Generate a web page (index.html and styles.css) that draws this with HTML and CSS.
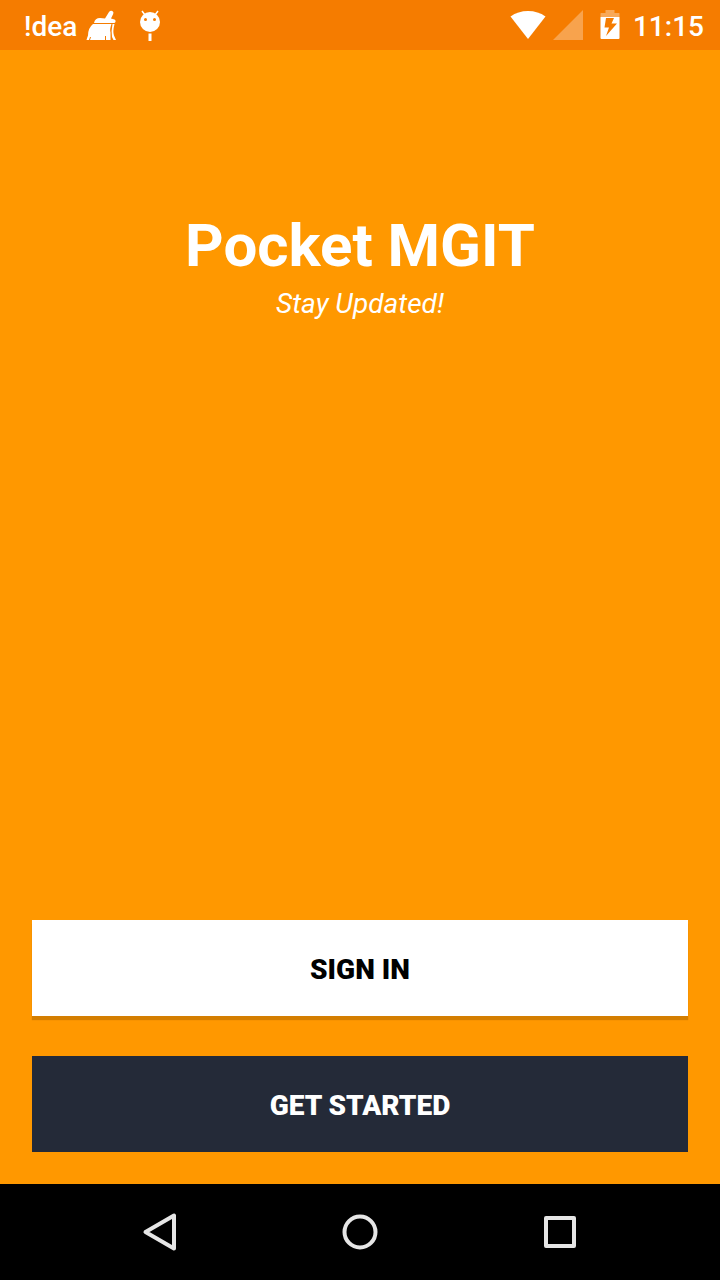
FILE: index.html
```html
<!DOCTYPE html>
<html lang="en">
<head>
<meta charset="utf-8">
<meta name="viewport" content="width=device-width, initial-scale=1">
<title>Pocket MGIT</title>
<link rel="stylesheet" href="styles.css">
</head>
<body>
<header class="status-bar">
  <div class="status-left">
    <span class="carrier">!dea</span>
    <svg class="icon-broom" width="32" height="32" viewBox="0 0 32 32" fill="#fff" aria-hidden="true">
      <path d="M19 8.500L23 2q1.500-2 3.300-1t.9 3L25 8.500l3.500 1q1.500.5 1 2.500l-1 1H8q1-5 6-5z"/>
      <path d="M7 14h18.500q-2 5-1 8.500V30H.5q.5-2 1.500-4.500Q2 18 7 14z"/>
      <path d="M26.500 14h2q-2 8-.5 11.500l2 4.500h-2.500l-1.500-3q-1-6 .500-13z"/>
      <path d="M19.500 26v4M4.500 27l-1 3" fill="none" stroke="#f57c00"/>
    </svg>
    <svg class="icon-android" width="24" height="32" viewBox="0 0 24 32" aria-hidden="true">
      <path d="M4 1l3 4M20 1l-3 4" stroke="#fff" stroke-width="1.500"/>
      <circle cx="12" cy="12" r="10" fill="#fff"/>
      <circle cx="7.500" cy="9.500" r="1.500" fill="#f57c00"/>
      <circle cx="16.500" cy="9.500" r="1.500" fill="#f57c00"/>
      <path d="M10.500 23.500h3V31h-3z" fill="#fff"/>
    </svg>
  </div>
  <div class="status-right">
    <svg width="36" height="32" viewBox="0 0 36 32" aria-hidden="true">
      <path d="M.5 6.500Q8 1 18 1t17.500 5.500L18 29z" fill="#fff"/>
    </svg>
    <svg class="icon-signal" width="30" height="32" viewBox="0 0 30 32" aria-hidden="true">
      <path d="M30 0v30H0z" fill="#fff" fill-opacity=".3"/>
    </svg>
    <svg class="icon-battery" width="20" height="32" viewBox="0 0 20 32" aria-hidden="true">
      <path d="M5.500 0h9v3H19q.5 0 .5.500V7H.5V3.500Q.5 3 1 3h4.500z" fill="#fff" fill-opacity=".35"/>
      <path fill-rule="evenodd" d="M.5 7h19v21q0 1-1 1h-17q-1 0-1-1zM6 8L4.500 17.500H9L6 26l11-12.500h-5.500L14 8z" fill="#fff"/>
    </svg>
    <time class="clock">11:15</time>
  </div>
</header>
<main class="welcome">
  <div class="brand">
    <h1 class="brand-name">Pocket MGIT</h1>
    <p class="tagline">Stay Updated!</p>
  </div>
  <div class="actions">
    <button class="action action-light" type="button">SIGN IN</button>
    <button class="action action-dark" type="button">GET STARTED</button>
  </div>
</main>
<nav class="nav-bar" aria-label="System">
  <button class="nav-key" type="button" aria-label="Back">
    <svg width="40" height="40" viewBox="0 0 40 40"><path d="M5.500 20L34 3.500v33z"/></svg>
  </button>
  <button class="nav-key" type="button" aria-label="Home">
    <svg width="40" height="40" viewBox="0 0 40 40"><circle cx="20" cy="20" r="15.500"/></svg>
  </button>
  <button class="nav-key" type="button" aria-label="Recent apps">
    <svg width="40" height="40" viewBox="0 0 40 40"><path d="M6 6h28v28H6z"/></svg>
  </button>
</nav>
</body>
</html>
```
FILE: styles.css
```css
* {
  box-sizing: border-box;
}

body {
  margin: 0;
  min-height: 100vh;
  display: flex;
  flex-direction: column;
  background: #ff9800;
  color: #fff;
  font-family: Roboto, "Liberation Sans", sans-serif;
}

svg {
  display: block;
}

.status-bar {
  height: 50px;
  padding: 2px 16px 0 24px;
  display: flex;
  justify-content: space-between;
  background: #f57c00;
  font-size: 28px;
  font-weight: 500;
  line-height: 32px;
}

.status-left,
.status-right {
  display: flex;
  align-items: center;
}

.carrier,
.clock {
  padding-top: 2px;
}

.icon-broom {
  margin-left: 9px;
}

.icon-android {
  margin-left: 20px;
}

.icon-signal {
  margin-left: 7px;
}

.icon-battery {
  margin: 0 13px 0 17px;
}

.welcome {
  flex: 1;
  padding: 160px 32px 32px;
  display: flex;
  flex-direction: column;
  justify-content: space-between;
}

.brand {
  text-align: center;
}

.brand-name {
  margin: 0;
  font-size: 60px;
  font-weight: 700;
  line-height: 72px;
}

.tagline {
  margin: 4px 0 0;
  font-size: 28px;
  font-style: italic;
  line-height: 36px;
}

.actions {
  display: flex;
  flex-direction: column;
  gap: 40px;
}

.action {
  height: 96px;
  padding: 4px 16px 0;
  border: 0;
  font: 900 28px/32px Roboto, "Liberation Sans", sans-serif;
}

.action-light {
  background: #fff;
  color: #000;
  box-shadow: 0 4px 1px rgba(0, 0, 0, 0.17);
}

.action-dark {
  background: #242a38;
  color: #fff;
}

.nav-bar {
  height: 96px;
  padding: 0 60px;
  display: grid;
  grid-template-columns: repeat(3, 1fr);
  background: #000;
}

.nav-key {
  padding: 0;
  border: 0;
  display: grid;
  place-items: center;
  background: none;
  fill: none;
  stroke: #e6e6e6;
  stroke-width: 4px;
  stroke-linejoin: round;
}
```
